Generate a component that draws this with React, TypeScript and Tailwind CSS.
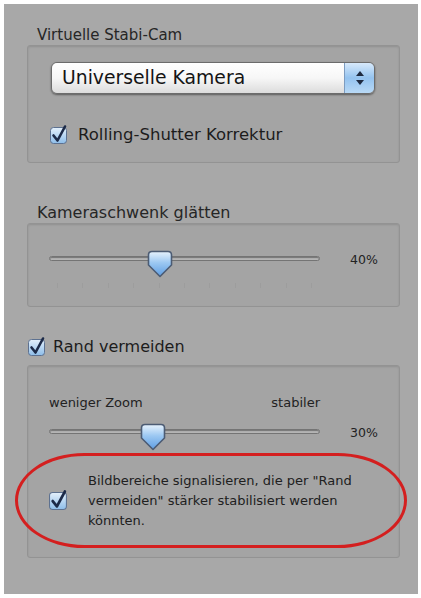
const font = { fontFamily: '"DejaVu Sans", "Liberation Sans", sans-serif' };

function CheckBox({ size = 18 }: { size?: number }) {
  return (
    <svg width={size} height={size} viewBox="0 0 18 18" className="shrink-0 overflow-visible">
      <defs>
        <linearGradient id="cbg" x1="0" y1="0" x2="0" y2="1">
          <stop offset="0" stopColor="#e4f0fb" />
          <stop offset="0.5" stopColor="#b9d7f3" />
          <stop offset="1" stopColor="#8dbde9" />
        </linearGradient>
      </defs>
      <rect x="0.5" y="1.5" width="16" height="16" rx="3" fill="url(#cbg)" stroke="#5d7190" />
      <path d="M3.5 9.5 L7.5 14.5 L15 0.5" fill="none" stroke="#1c2a48" strokeWidth="2.6" strokeLinecap="round" strokeLinejoin="round" />
    </svg>
  );
}

function Thumb() {
  return (
    <svg width="26" height="28" viewBox="0 0 26 28">
      <defs>
        <linearGradient id="thg" x1="0" y1="0" x2="0" y2="1">
          <stop offset="0" stopColor="#e8f3fd" />
          <stop offset="0.45" stopColor="#9cc8f2" />
          <stop offset="1" stopColor="#5e9de2" />
        </linearGradient>
      </defs>
      <path d="M5 1.5 H21 Q24.5 1.5 24.5 5 V15 L13 26.5 L1.5 15 V5 Q1.5 1.5 5 1.5 Z" fill="url(#thg)" stroke="#4c5c74" strokeWidth="1.6" strokeLinejoin="round" />
    </svg>
  );
}

function Slider({ thumbLeft, ticks, value }: { thumbLeft: number; ticks?: boolean; value: string }) {
  return (
    <div className="flex items-start">
      <div className={`relative w-[271px] ${ticks ? 'h-[38px]' : 'h-[28px]'}`}>
        <div className="absolute left-0 right-0 top-[6px] h-[5px] rounded-full bg-[#b4b4b4] border border-[#747474] shadow-[inset_0_1px_1px_rgba(0,0,0,0.35)]" />
        {ticks && (
          <div className="absolute left-[8px] right-[8px] top-[33px] flex justify-between">
            {Array.from({ length: 11 }).map((_, i) => (
              <div key={i} className="w-px h-[5px] bg-[#9d9d9d]" />
            ))}
          </div>
        )}
        <div className="absolute top-0" style={{ left: thumbLeft }}>
          <Thumb />
        </div>
      </div>
      <div className="ml-[30px] mt-[2px] text-[12.5px] leading-[16px] text-[#222]">{value}</div>
    </div>
  );
}

export default function App() {
  return (
    <div className="w-[421px] h-[598px] bg-white pt-[4px] pl-[4px]" style={font}>
      <div className="w-[414px] h-[590px] bg-[#a8a8a8] pl-[23px] pt-[22px] text-[#1c1c1c]">
        <div className="pl-[10px] h-[19px] text-[15px] leading-[18px] text-[#262626]">Virtuelle Stabi-Cam</div>
        <div className="w-[373px] h-[118px] rounded-[3px] border border-[#939393] bg-[#a4a4a4] shadow-[inset_0_1px_2px_rgba(0,0,0,0.12)] pt-[16px] pl-[23px]">
          <div className="flex w-[324px] h-[32px] rounded-[6px] border border-[#6c6c6c] shadow-[0_1px_2px_rgba(0,0,0,0.45)] overflow-hidden">
            <div className="flex-1 flex items-center pl-[10px] bg-gradient-to-b from-[#ffffff] via-[#f7f7f7] to-[#dcdcdc] text-[18.8px] text-[#151515]">
              Universelle Kamera
            </div>
            <div className="w-[30px] flex flex-col items-center justify-center gap-[4px] border-l border-[#7d9cc0] bg-gradient-to-b from-[#d7e9fb] via-[#94c3ef] to-[#b9d9f6]">
              <svg width="8" height="5" viewBox="0 0 8 5"><path d="M4 0 L8 5 H0 Z" fill="#1e2a40" /></svg>
              <svg width="8" height="5" viewBox="0 0 8 5"><path d="M0 0 H8 L4 5 Z" fill="#1e2a40" /></svg>
            </div>
          </div>
          <div className="mt-[32px] flex items-center h-[18px] gap-[10px] -ml-px">
            <CheckBox />
            <span className="text-[16.5px] leading-[18px]">Rolling-Shutter Korrektur</span>
          </div>
        </div>

        <div className="mt-[41px] pl-[10px] h-[19px] text-[16px] leading-[18px] text-[#262626]">Kameraschwenk glätten</div>
        <div className="w-[373px] h-[84px] rounded-[3px] border border-[#939393] bg-[#a4a4a4] shadow-[inset_0_1px_2px_rgba(0,0,0,0.12)] pt-[26px] pl-[21px]">
          <Slider thumbLeft={98} ticks value="40%" />
        </div>

        <div className="mt-[30px] flex items-center h-[20px] gap-[7px] pl-px">
          <CheckBox />
          <span className="text-[16px] leading-[20px]">Rand vermeiden</span>
        </div>

        <div className="mt-[8px] w-[373px] h-[193px] rounded-[3px] border border-[#939393] bg-[#a4a4a4] shadow-[inset_0_1px_2px_rgba(0,0,0,0.12)] pt-[29px] pl-[21px]">
          <div className="w-[271px] flex justify-between text-[13px] leading-[16px] text-[#222]">
            <span>weniger Zoom</span>
            <span>stabiler</span>
          </div>
          <div className="mt-[12px]">
            <Slider thumbLeft={91} value="30%" />
          </div>
          <div className="mt-[2px] -ml-[34px] w-[392px] h-[95px] rounded-[70px_/_48px] border-[3px] border-[#d41f1f] flex items-center pl-[31px]">
            <CheckBox size={19} />
            <p className="ml-[20px] text-[13px] leading-[20px] text-[#202020]">
              Bildbereiche signalisieren, die per "Rand
              <br />
              vermeiden" stärker stabilisiert werden
              <br />
              könnten.
            </p>
          </div>
        </div>
      </div>
    </div>
  );
}
